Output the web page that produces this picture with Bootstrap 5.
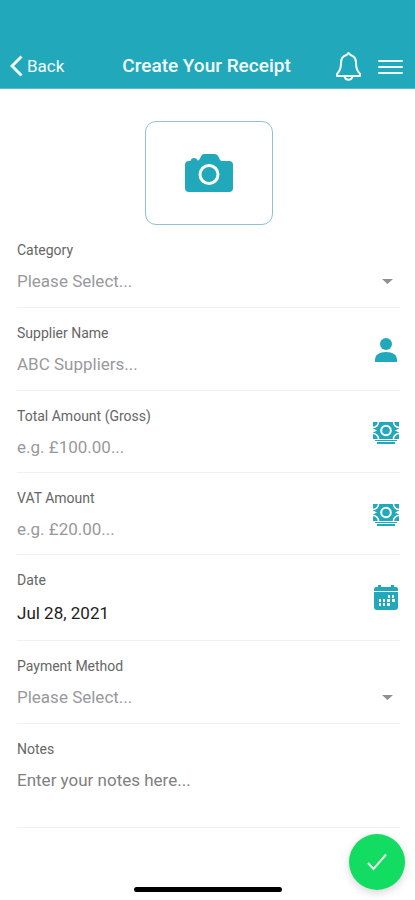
<!DOCTYPE html>
<html lang="en">
<head>
<meta charset="utf-8">
<meta name="viewport" content="width=device-width, initial-scale=1">
<title>Create Your Receipt</title>
<link href="https://cdn.jsdelivr.net/npm/bootstrap@5.3.0/dist/css/bootstrap.min.css" rel="stylesheet">
<style>
  :root { --teal: #22a8bb; }
  body { font-family: Roboto, "Liberation Sans", sans-serif; background: #fff; }
  svg { display: block; flex: none; }
  .topbar { background: var(--teal); padding: 44px 12px 0 10px; border-bottom: 1px solid #5dbccb; }
  .topbar-row { display: grid; grid-template-columns: 1fr auto 1fr; align-items: center; height: 44px; color: #f2fdff; }
  .back-link { color: inherit; font-size: 17px; line-height: 24px; gap: 4px; }
  .page-title { font-size: 19px; line-height: 24px; font-weight: 500; }
  .form-area { padding: 32px 15px 0 17px; }
  .photo-btn { width: 128px; height: 104px; border: 1px solid #8fc3d2; border-radius: 11px; background: #fff; color: var(--teal); }
  .field { padding: 15px 0 14px; border-bottom: 1px solid #f0f0f0; }
  .field-body { gap: 9px; }
  .field label { font-size: 14px; line-height: 20px; color: #666; }
  .field .entry { appearance: none; border: 0; border-radius: 0; padding: 0; height: 24px; width: 100%; background: transparent; font-size: 17px; line-height: 24px; color: #1c1c1c; outline-offset: 2px; }
  .field select.entry { color: #97999c; }
  .field .entry::placeholder { color: #97999c; opacity: 1; }
  .field-amount { padding-bottom: 13px; }
  .field-date { padding-bottom: 15px; }
  .field-date .field-body { gap: 11px; }
  .field textarea.entry { height: 45px; resize: none; overflow: hidden; }
  .field textarea.entry::placeholder { color: #808080; }
  .field-icon { color: var(--teal); width: 28px; }
  .caret { color: #8f8f8f; margin: 0 7px 9px 0; }
  .home-bar { width: 148px; height: 5px; background: #000; margin-bottom: 8px; }
  .save-btn { right: 10px; bottom: 10px; width: 56px; height: 56px; background: #12dc62; box-shadow: 0 3px 9px rgba(0,0,0,.16); color: #e9ffe9; }
</style>
</head>
<body>
<div class="min-vh-100 d-flex flex-column position-relative">
  <header class="topbar">
    <div class="topbar-row">
      <a href="#" class="back-link d-flex align-items-center text-decoration-none">
        <svg width="13" height="22" viewBox="0 0 13 22" fill="none" stroke="currentColor" stroke-width="3" aria-hidden="true"><path d="M11.5 1.5 2 11l9.500 9.500"/></svg>
        Back
      </a>
      <h1 class="page-title m-0">Create Your Receipt</h1>
      <div class="d-flex align-items-center justify-content-end gap-3">
        <button type="button" class="btn p-0 border-0 text-reset" aria-label="Notifications">
          <svg width="27" height="30" viewBox="0 0 27 30" fill="none" stroke="currentColor" stroke-width="2" stroke-linejoin="round" aria-hidden="true"><path d="M13.500 2 11.500 4C7.500 5 6 8 6 12c0 6-1.500 8.500-4 11v2h23v-2c-2.500-2.500-4-5-4-11 0-4-1.500-7-5.500-8Z"/><path d="M9.500 25c.4 2.300 1.700 3.700 4 3.700s3.600-1.400 4-3.700"/></svg>
        </button>
        <button type="button" class="btn p-0 border-0 text-reset" aria-label="Menu">
          <svg width="25" height="16" viewBox="0 0 25 16" stroke="currentColor" stroke-width="2" stroke-linecap="round" aria-hidden="true"><path d="M1 3h23M1 9h23M1 15h23"/></svg>
        </button>
      </div>
    </div>
  </header>

  <main>
    <form class="form-area" id="receipt">
      <div class="d-flex justify-content-center">
        <button type="button" class="photo-btn d-flex align-items-center justify-content-center p-0" aria-label="Add photo">
          <svg width="48" height="38" viewBox="0 0 48 38" aria-hidden="true"><path fill="currentColor" d="M4 7h1.500c.4-2 1.600-3 3.500-3s3 .8 3.500 2.500c1 0 1.700-.6 2.200-1.500l1.500-3Q17 0 19.500 0h10Q32 0 33 2l1.800 3.500Q35.500 7 37.500 7H44q4 0 4 4v23q0 4-4 4H4q-4 0-4-4V11q0-4 4-4Z"/><circle cx="24" cy="20.500" r="9" fill="none" stroke="#fff" stroke-width="3"/></svg>
        </button>
      </div>

      <div class="field d-flex align-items-end">
        <div class="field-body d-flex flex-column flex-grow-1">
          <label for="category">Category</label>
          <select id="category" class="entry"><option>Please Select...</option></select>
        </div>
        <svg class="caret" width="11" height="5" viewBox="0 0 11 5" aria-hidden="true"><path fill="currentColor" d="M0 0h11L5.500 5Z"/></svg>
      </div>

      <div class="field d-flex align-items-center">
        <div class="field-body d-flex flex-column flex-grow-1">
          <label for="supplier">Supplier Name</label>
          <input id="supplier" type="text" class="entry" placeholder="ABC Suppliers...">
        </div>
        <svg class="field-icon" height="24" viewBox="0 0 28 24" fill="currentColor" aria-hidden="true"><circle cx="14" cy="6" r="6"/><path d="M3 24v-2c0-5 4-8 11-8s11 3 11 8v2Z"/></svg>
      </div>

      <div class="field field-amount d-flex align-items-center">
        <div class="field-body d-flex flex-column flex-grow-1">
          <label for="total">Total Amount (Gross)</label>
          <input id="total" type="text" inputmode="decimal" class="entry" placeholder="e.g. £100.00...">
        </div>
        <svg class="field-icon" height="22" viewBox="0 0 28 22" fill="none" aria-hidden="true"><path fill="currentColor" d="M1 0h26v17H1Z"/><g stroke="#fff" stroke-width="1.500"><circle cx="14" cy="8.500" r="4.800" stroke-width="2"/><circle cx="1" cy="0" r="5.500"/><circle cx="27" cy="0" r="5.500"/><circle cx="1" cy="17" r="5.500"/><circle cx="27" cy="17" r="5.500"/></g><path fill="#fff" d="M1 6.500 5 8.500l-4 2H0v-4ZM27 6.500 23 8.500l4 2h1v-4Z"/><path stroke="currentColor" stroke-width="2" d="M5 21h18"/><path stroke="currentColor" stroke-width="1" d="M3 18.500h22"/></svg>
      </div>

      <div class="field field-amount d-flex align-items-center">
        <div class="field-body d-flex flex-column flex-grow-1">
          <label for="vat">VAT Amount</label>
          <input id="vat" type="text" inputmode="decimal" class="entry" placeholder="e.g. £20.00...">
        </div>
        <svg class="field-icon" height="22" viewBox="0 0 28 22" fill="none" aria-hidden="true"><path fill="currentColor" d="M1 0h26v17H1Z"/><g stroke="#fff" stroke-width="1.500"><circle cx="14" cy="8.500" r="4.800" stroke-width="2"/><circle cx="1" cy="0" r="5.500"/><circle cx="27" cy="0" r="5.500"/><circle cx="1" cy="17" r="5.500"/><circle cx="27" cy="17" r="5.500"/></g><path fill="#fff" d="M1 6.500 5 8.500l-4 2H0v-4ZM27 6.500 23 8.500l4 2h1v-4Z"/><path stroke="currentColor" stroke-width="2" d="M5 21h18"/><path stroke="currentColor" stroke-width="1" d="M3 18.500h22"/></svg>
      </div>

      <div class="field field-date d-flex align-items-center">
        <div class="field-body d-flex flex-column flex-grow-1">
          <label for="date">Date</label>
          <input id="date" type="text" class="entry" value="Jul 28, 2021">
        </div>
        <svg class="field-icon" height="25" viewBox="0 0 28 25" aria-hidden="true"><path fill="currentColor" d="M6 0h3v2h10V0h3v2h2q2 0 2 2v2H2V4q0-2 2-2h2ZM2 7h24v15q0 3-3 3H5q-3 0-3-3Z"/><path fill="#fff" d="M16 10h2v3h-2zM20 10h2v3h-2zM7 14h2v3H7zM11 14h2v3h-2zM15 14h3v3h-3zM20 14h3v3h-3zM7 18h2v3H7zM11 18h2v3h-2zM15 18h3v3h-3z"/></svg>
      </div>

      <div class="field d-flex align-items-end">
        <div class="field-body d-flex flex-column flex-grow-1">
          <label for="payment">Payment Method</label>
          <select id="payment" class="entry"><option>Please Select...</option></select>
        </div>
        <svg class="caret" width="11" height="5" viewBox="0 0 11 5" aria-hidden="true"><path fill="currentColor" d="M0 0h11L5.500 5Z"/></svg>
      </div>

      <div class="field d-flex">
        <div class="field-body d-flex flex-column flex-grow-1">
          <label for="notes">Notes</label>
          <textarea id="notes" class="entry" placeholder="Enter your notes here..."></textarea>
        </div>
      </div>
    </form>
  </main>

  <div class="home-bar rounded-pill mt-auto mx-auto"></div>
  <button type="submit" form="receipt" class="save-btn position-absolute rounded-circle border-0 p-0 d-flex align-items-center justify-content-center" aria-label="Save receipt">
    <svg width="20" height="18" viewBox="0 0 20 18" fill="none" stroke="currentColor" stroke-width="2" aria-hidden="true"><path d="m1 10 5.500 6L19 1.500"/></svg>
  </button>
</div>
<script src="https://cdn.jsdelivr.net/npm/bootstrap@5.3.0/dist/js/bootstrap.bundle.min.js"></script>
</body>
</html>
